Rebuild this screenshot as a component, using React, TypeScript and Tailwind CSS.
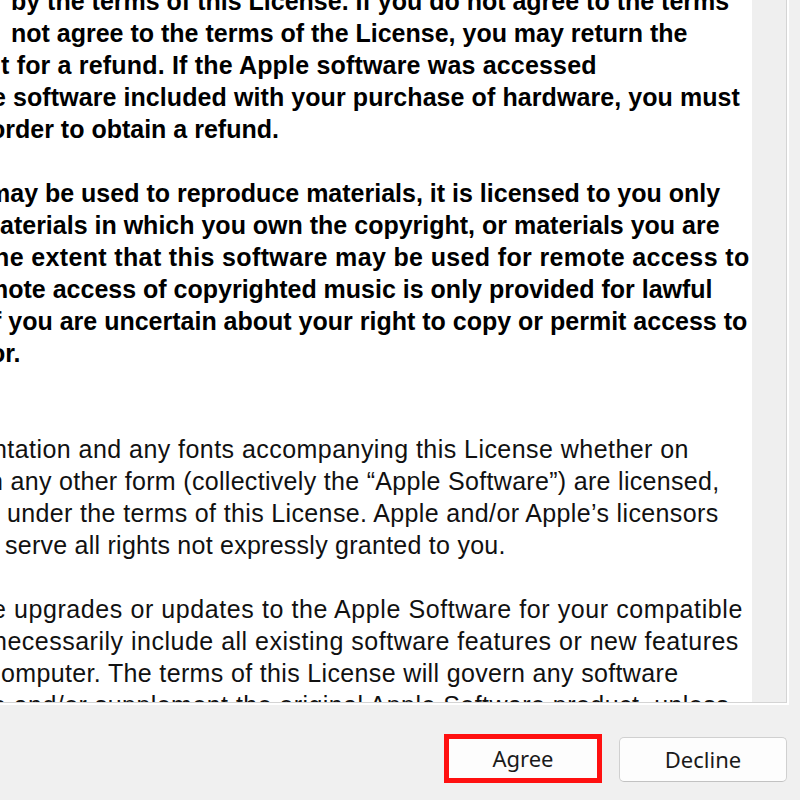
import React from "react";

type Line = { t: string; ml: string; x?: string };

const para1: Line[] = [
  { t: "by the terms of this License. If you do not agree to the terms", ml: "ml-[11px]" },
  { t: "not agree to the terms of the License, you may return the", ml: "ml-[11px]" },
  { t: "t for a refund. If the Apple software was accessed", ml: "ml-[1px]", x: "tracking-[0.18px]" },
  { t: "e software included with your purchase of hardware, you must", ml: "-ml-[8px]", x: "tracking-[0.08px]" },
  { t: "order to obtain a refund.", ml: "-ml-[10px]" },
];

const para2: Line[] = [
  { t: "may be used to reproduce materials, it is licensed to you only", ml: "-ml-[12px]" },
  { t: "aterials in which you own the copyright, or materials you are", ml: "ml-[0px]" },
  { t: "he extent that this software may be used for remote access to", ml: "-ml-[6px]", x: "tracking-[0.36px]" },
  { t: "mote access of copyrighted music is only provided for lawful", ml: "-ml-[14px]" },
  { t: "f you are uncertain about your right to copy or permit access to", ml: "-ml-[7px]" },
  { t: "or.", ml: "-ml-[10px]" },
];

const para3: Line[] = [
  { t: "ntation and any fonts accompanying this License whether on", ml: "-ml-[7px]" },
  { t: "n any other form (collectively the \u201CApple Software\u201D) are licensed,", ml: "-ml-[11px]", x: "tracking-[0.31px]" },
  { t: "under the terms of this License. Apple and/or Apple\u2019s licensors", ml: "ml-[7px]", x: "tracking-[0.36px]" },
  { t: "serve all rights not expressly granted to you.", ml: "ml-[5px]", x: "tracking-[0.25px]" },
];

const para4: Line[] = [
  { t: "e upgrades or updates to the Apple Software for your compatible", ml: "-ml-[8px]", x: "tracking-[0.58px]" },
  { t: "necessarily include all existing software features or new features", ml: "-ml-[7px]", x: "tracking-[0.5px]" },
  { t: "omputer. The terms of this License will govern any software", ml: "ml-[1px]", x: "tracking-[0.35px]" },
  { t: "e and/or supplement the original Apple Software product, unless", ml: "-ml-[8px]" },
];

function Para({ lines, bold }: { lines: Line[]; bold?: boolean }) {
  return (
    <div className={bold ? "font-bold" : "font-normal tracking-[0.45px] text-[#111]"}>
      {lines.map((l, i) => (
        <div key={i} className={`h-[32px] leading-[32px] whitespace-nowrap ${l.ml} ${l.x ?? ""}`}>
          {l.t}
        </div>
      ))}
    </div>
  );
}

export default function App() {
  return (
    <div className="w-[800px] h-[800px] bg-[#f0f0f0] overflow-hidden flex flex-col">
      <div className="w-[789px] h-[705px] border-r-2 border-b-2 border-white shrink-0">
        <div className="w-full h-full border-r border-b border-[#d4d4d4] flex">
          <div className="w-[752px] h-full bg-white overflow-hidden">
            <div
              className="-mt-[15px] text-[25px] text-black"
              style={{ fontFamily: '"Liberation Sans", Arial, sans-serif' }}
            >
              <Para lines={para1} bold />
              <div className="h-[32px]" />
              <Para lines={para2} bold />
              <div className="h-[64px]" />
              <Para lines={para3} />
              <div className="h-[32px]" />
              <Para lines={para4} />
            </div>
          </div>
          <div className="flex-1 h-full bg-[#efefef]" />
        </div>
      </div>
      <div
        className="flex justify-end items-start pt-[29px] pr-[13px] gap-[17px]"
        style={{ fontFamily: '"Noto Sans", "Open Sans", sans-serif' }}
      >
        <div className="w-[158px] h-[49px] border-[5px] border-[#ff1010] bg-[#fdfdfd] flex items-center justify-center text-[22px] text-[#1a1a1a]">
          Agree
        </div>
        <div className="w-[168px] h-[45px] mt-[3px] rounded-[5px] border border-[#d0d0d0] border-b-[#c2c2c2] bg-[#fdfdfd] flex items-center justify-center text-[22px] text-[#1a1a1a]">
          Decline
        </div>
      </div>
    </div>
  );
}
